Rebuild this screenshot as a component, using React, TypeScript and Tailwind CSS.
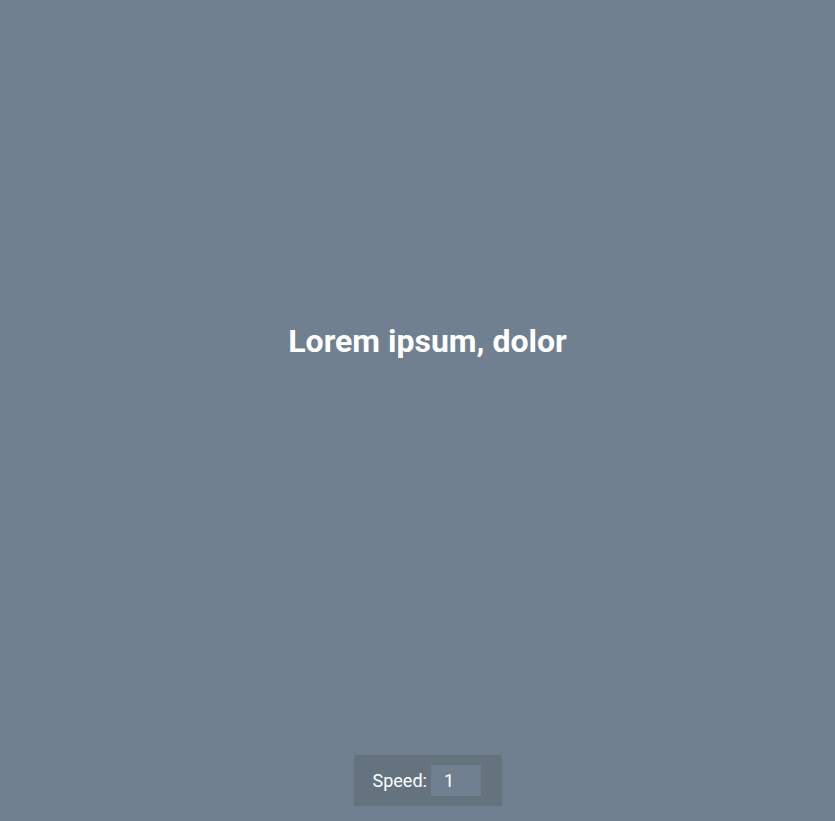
export default function App() {
  return (
    <div
      className="w-full h-[821px] bg-[#708090] flex flex-col items-center text-white overflow-hidden pl-[20px]"
      style={{ fontFamily: 'Roboto, "Liberation Sans", sans-serif' }}
    >
      <div className="h-[682px] w-full flex items-center justify-center">
        <h1 className="text-[32px] font-bold leading-none">Lorem ipsum, dolor</h1>
      </div>
      <div className="mt-[73px] h-[51px] w-[148px] bg-[#65737f] flex items-center pl-[19px] gap-[4px]">
        <label className="text-[18px] leading-none">Speed:</label>
        <input
          type="text"
          defaultValue="1"
          className="w-[50px] h-[31px] bg-[#708090] text-white text-[18px] pl-[13px] outline-none border-0"
        />
      </div>
    </div>
  );
}
